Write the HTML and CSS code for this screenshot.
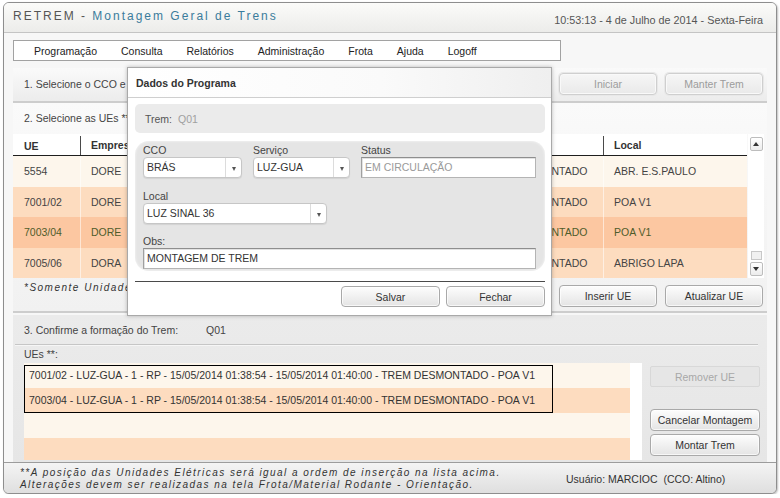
FILE: index.html
```html
<!DOCTYPE html>
<html lang="pt-BR">
<head>
<meta charset="utf-8">
<title>RETREM - Montagem Geral de Trens</title>
<link rel="stylesheet" href="styles.css">
</head>
<body>
<div class="window">
  <header class="titlebar">
    <h1 class="apptitle"><span class="app">RETREM - </span><span class="screen">Montagem Geral de Trens</span></h1>
    <div class="clock">10:53:13 - 4 de Julho de 2014 - Sexta-Feira</div>
  </header>

  <main class="content">
    <nav class="menu">
      <a>Programação</a><a>Consulta</a><a>Relatórios</a><a>Administração</a><a>Frota</a><a>Ajuda</a><a>Logoff</a>
    </nav>

    <section class="step1">
      <div class="step-text">1. Selecione o CCO e</div>
      <div class="btn-pair">
        <button class="btn btn-off">Iniciar</button>
        <button class="btn btn-off">Manter Trem</button>
      </div>
    </section>

    <section class="step2">
      <div class="step-title">2. Selecione as UEs **:</div>
      <div class="grid-wrap">
        <div class="grid">
          <div class="grow ghead"><span>UE</span><span>Empresa</span><span></span><span></span><span></span><span>Local</span></div>
          <div class="grow r-light"><span>5554</span><span>DORE</span><span></span><span></span><span>DESMONTADO</span><span>ABR. E.S.PAULO</span></div>
          <div class="grow r-peach"><span>7001/02</span><span>DORE</span><span></span><span></span><span>DESMONTADO</span><span>POA V1</span></div>
          <div class="grow r-sel"><span>7003/04</span><span>DORE</span><span></span><span></span><span>DESMONTADO</span><span>POA V1</span></div>
          <div class="grow r-peach"><span>7005/06</span><span>DORA</span><span></span><span></span><span>DESMONTADO</span><span>ABRIGO LAPA</span></div>
        </div>
        <div class="vscroll">
          <span class="sb-btn"><i class="tri-up"></i></span>
          <span class="sb-space"></span>
          <span class="sb-thumb"></span>
          <span class="sb-btn"><i class="tri-down"></i></span>
        </div>
      </div>
      <div class="step2-foot">
        <p class="note">*Somente Unidades</p>
        <div class="btn-pair">
          <button class="btn">Inserir UE</button>
          <button class="btn">Atualizar UE</button>
        </div>
      </div>
    </section>

    <section class="step3">
      <div class="s3-head"><span>3. Confirme a formação do Trem:</span><span class="s3-train">Q01</span></div>
      <div class="s3-label">UEs **:</div>
      <div class="s3-body">
        <div class="uelist">
          <div class="ue-rows">
            <div class="ue-row r-light">7001/02 - LUZ-GUA - 1 - RP - 15/05/2014 01:38:54 - 15/05/2014 01:40:00 - TREM DESMONTADO - POA V1</div>
            <div class="ue-row r-peach">7003/04 - LUZ-GUA - 1 - RP - 15/05/2014 01:38:54 - 15/05/2014 01:40:00 - TREM DESMONTADO - POA V1</div>
            <div class="ue-row r-light"></div>
            <div class="ue-row r-peach"></div>
            <div class="ue-sel"></div>
          </div>
        </div>
        <div class="s3-actions">
          <button class="btn btn-dis">Remover UE</button>
          <div class="s3-main">
            <button class="btn">Cancelar Montagem</button>
            <button class="btn">Montar Trem</button>
          </div>
        </div>
      </div>
    </section>
  </main>

  <footer class="statusbar">
    <div class="foot-notes">
      <p>**A posição das Unidades Elétricas será igual a ordem de inserção na lista acima.</p>
      <p>Alterações devem ser realizadas na tela Frota/Material Rodante - Orientação.</p>
    </div>
    <div class="user">Usuário: MARCIOC&nbsp; (CCO: Altino)</div>
  </footer>

  <div class="modal">
    <div class="modal-title">Dados do Programa</div>
    <div class="modal-body">
      <div class="train-box"><span class="tlbl">Trem:</span><span class="tval">Q01</span></div>
      <div class="fields">
        <div class="frow">
          <div class="field f-cco">
            <span class="flabel">CCO</span>
            <span class="select"><span class="sel-val">BRÁS</span><span class="sel-btn"><i class="tri-down"></i></span></span>
          </div>
          <div class="field f-serv">
            <span class="flabel">Serviço</span>
            <span class="select"><span class="sel-val">LUZ-GUA</span><span class="sel-btn"><i class="tri-down"></i></span></span>
          </div>
          <div class="field f-status">
            <span class="flabel">Status</span>
            <span class="input input-off">EM CIRCULAÇÃO</span>
          </div>
        </div>
        <div class="frow frow-gap">
          <div class="field f-local">
            <span class="flabel">Local</span>
            <span class="select"><span class="sel-val">LUZ SINAL 36</span><span class="sel-btn"><i class="tri-down"></i></span></span>
          </div>
        </div>
        <div class="frow frow-gap2">
          <div class="field f-obs">
            <span class="flabel">Obs:</span>
            <span class="input">MONTAGEM DE TREM</span>
          </div>
        </div>
      </div>
      <div class="modal-foot">
        <button class="btn mbtn">Salvar</button>
        <button class="btn mbtn">Fechar</button>
      </div>
    </div>
  </div>
</div>
</body>
</html>
```

FILE: styles.css
```css
* { box-sizing: border-box; }
html, body { margin: 0; background: #ffffff; }
body {
  font-family: "Liberation Sans", Arial, sans-serif;
  font-size: 10.5px;
  color: #333;
}
p { margin: 0; }

.window {
  position: relative;
  margin: 2px 0 0 3px;
  width: 774px;
  height: 492px;
  border: 1px solid #8e8e8e;
  border-radius: 6px;
  background: #f7f7f7;
  display: flex;
  flex-direction: column;
  overflow: hidden;
  box-shadow: 1px 1px 2px rgba(0,0,0,.25);
}

/* title bar */
.titlebar {
  height: 30px;
  flex: none;
  display: flex;
  align-items: center;
  justify-content: space-between;
  padding: 0 13px 0 9px;
  background: linear-gradient(#fbfbf9, #ececea);
  border-bottom: 1px solid #c4c4c4;
}
.apptitle {
  margin: 0;
  font-size: 12px;
  font-weight: normal;
  letter-spacing: 2px;
  line-height: 14px;
  margin-top: -3px;
}
.apptitle .app { color: #555; }
.apptitle .screen { color: #3b7c9c; }
.clock { font-size: 10.8px; color: #555; padding-top: 4px; }

/* content */
.content {
  flex: none;
  padding: 7px 9px 0 9px;
  display: flex;
  flex-direction: column;
}
.menu {
  width: 548px;
  height: 21px;
  border: 1px solid #a2a2a2;
  background: #fff;
  display: flex;
  align-items: center;
  gap: 24px;
  padding-left: 20px;
  color: #222;
}

.step1 {
  margin-top: 7px;
  height: 35px;
  display: flex;
  align-items: center;
  justify-content: space-between;
  padding: 0 4px 2px 11px;
  background: linear-gradient(#fafafa, #ececec);
  border-bottom: 2px solid #cdcdcd;
}
.step-text { color: #444; }

.btn-pair { display: flex; gap: 8px; }

.btn {
  font-family: "Liberation Sans", Arial, sans-serif;
  font-size: 10.5px;
  color: #333;
  height: 22px;
  width: 98px;
  padding: 0;
  border: 1px solid #a9a9a9;
  border-radius: 4px;
  background: linear-gradient(#fdfdfd, #e4e4e4);
  box-shadow: inset 0 0 0 1px rgba(255,255,255,.7);
}
.btn-off {
  color: #9c9c9c;
  border-color: #cfcfcf;
  background: linear-gradient(#f6f6f6, #e9e9e9);
  box-shadow: inset 0 0 0 1px #f9f9f9, 0 0 0 1px #e8e8e8;
}
.btn-dis {
  color: #a8a8a8;
  border-color: #d8d8d8;
  background: #e6e6e6;
  box-shadow: none;
  border-radius: 2px;
}

/* step 2 */
.step2 {
  background: linear-gradient(#fafafa, #f1f1f1);
  border-bottom: 2px solid #cdcdcd;
}
.step-title {
  height: 31px;
  line-height: 31px;
  padding-left: 11px;
  color: #444;
}
.grid-wrap {
  display: flex;
  padding-right: 3px;
}
.grid { width: 734px; }
.grow {
  display: grid;
  grid-template-columns: 68px 80px 155px 155px 133px 143px;
  height: 30.5px;
  align-items: center;
  color: #444;
}
.grow > span {
  padding-left: 10px;
  height: 100%;
  display: flex;
  align-items: center;
  white-space: nowrap;
  overflow: hidden;
  border-right: 1px solid rgba(255,255,255,.55);
}
.grow > span:nth-child(5) { padding-left: 42px; }
.grow > span:first-child { padding-left: 11px; }
.grow > span:last-child { border-right: none; }
.ghead {
  height: 22px;
  background: #fff;
  font-weight: bold;
  color: #333;
  border-bottom: 1.5px solid #1e1e1e;
}
.ghead > span { border-right: 1px solid transparent; }
.ghead > span:first-child,
.ghead > span:nth-child(5) {
  border-right-color: #4a4a4a;
  height: 19px;
  align-self: end;
}
.r-light { background: #fdf6ec; }
.r-peach { background: #fddcbf; }
.r-sel { background: #fcc7a1; color: #4f5c2b; }

.vscroll {
  width: 16px;
  margin-left: 1px;
  background: #fff;
  display: flex;
  flex-direction: column;
  align-items: center;
  padding: 3px 0 2px;
}
.sb-btn {
  width: 13px;
  height: 14px;
  border: 1px solid #bdbdbd;
  border-radius: 2px;
  background: linear-gradient(#ffffff, #ececec);
  display: flex;
  align-items: center;
  justify-content: center;
}
.sb-space { flex: 1; }
.sb-thumb {
  width: 11px;
  height: 9px;
  border: 1px solid #c8c8c8;
  background: #f1f1f1;
  margin-bottom: 2px;
}
.tri-up, .tri-down { display: block; width: 0; height: 0; border-left: 3px solid transparent; border-right: 3px solid transparent; }
.tri-up { border-bottom: 4px solid #333; }
.tri-down { border-top: 4px solid #333; }

.step2-foot {
  height: 33px;
  display: flex;
  justify-content: space-between;
  align-items: flex-start;
  padding: 0 4px 0 11px;
}
.note {
  margin-top: 4px;
  font-style: italic;
  font-size: 10px;
  letter-spacing: 1.5px;
  color: #333;
  line-height: 12px;
}
.step2-foot .btn-pair { margin-top: 7px; }
.step2-foot .btn { height: 22px; }

/* step 3 */
.step3 {
  margin-top: 2px;
  height: 147px;
  background: linear-gradient(#ebebeb, #e6e6e6);
  padding: 0 0 2px 0;
  display: flex;
  flex-direction: column;
}
.s3-head {
  height: 30px;
  margin: 0 9px 0 2px;
  padding-left: 9px;
  display: flex;
  align-items: center;
  border-bottom: 1px solid #c6c6c6;
  box-shadow: 0 1px 0 #f6f6f6;
  color: #444;
}
.s3-train { margin-left: 28px; }
.s3-label {
  height: 18px;
  line-height: 18px;
  padding-left: 11px;
  color: #444;
}
.s3-body {
  flex: 1;
  display: flex;
  padding-left: 11px;
}
.uelist {
  width: 618px;
  height: 97px;
  background: #fff;
  overflow: hidden;
}
.ue-rows {
  position: relative;
  width: 606px;
}
.ue-row {
  height: 25px;
  line-height: 25px;
  padding-left: 5px;
  color: #333;
  white-space: nowrap;
}
.ue-sel {
  position: absolute;
  left: 0;
  top: 2px;
  width: 529px;
  height: 48px;
  border: 1px solid #000;
}
.s3-actions {
  width: 110px;
  margin-left: 8px;
  padding: 3px 0 4px;
  display: flex;
  flex-direction: column;
  justify-content: space-between;
}
.s3-actions .btn { width: 110px; }
.s3-actions .btn-dis { height: 21px; }
.s3-main { display: flex; flex-direction: column; gap: 3px; }

/* footer */
.statusbar {
  flex: none;
  height: 31px;
  border-top: 1px solid #9c9c9c;
  background: linear-gradient(#f4f4f4, #dfdfdf);
  display: flex;
  align-items: center;
  padding-left: 16px;
}
.foot-notes {
  width: 546px;
  font-style: italic;
  font-size: 10px;
  letter-spacing: 1.45px;
  line-height: 12px;
  color: #333;
  padding-top: 1px;
}
.user { color: #333; padding-top: 2px; }

/* modal */
.modal {
  position: absolute;
  left: 123px;
  top: 64px;
  width: 425px;
  height: 249px;
  background: #fff;
  border: 1px solid #a9a9a9;
  box-shadow: 0 0 4px rgba(0,0,0,.25);
  display: flex;
  flex-direction: column;
}
.modal-title {
  height: 30px;
  line-height: 30px;
  padding-left: 8px;
  font-weight: bold;
  color: #333;
  border-bottom: 1px solid #cfcfcf;
  background: linear-gradient(90deg, #ffffff 0%, #fafafa 60%, #efefef 100%);
}
.modal-body { padding: 0 6px 0 7px; }
.train-box {
  margin-top: 6px;
  height: 29px;
  border-radius: 5px;
  background: #ebebeb;
  display: flex;
  align-items: center;
  padding-left: 10px;
  gap: 6px;
}
.tlbl { color: #555; }
.tval { color: #a0a0a0; }

.fields {
  margin-top: 8px;
  height: 130px;
  border-radius: 14px;
  background: #e5e5e5;
  box-shadow: inset 0 0 3px rgba(255,255,255,.8);
  padding: 2px 9px 2px 8px;
}
.frow { display: flex; gap: 11px; }
.frow-gap { margin-top: 11px; }
.frow-gap2 { margin-top: 10px; }
.field { display: flex; flex-direction: column; }
.flabel { height: 14px; line-height: 14px; color: #444; }
.f-cco { width: 99px; }
.f-serv { width: 97px; }
.f-status { flex: 1; }
.f-local { width: 184px; }
.f-obs { flex: 1; }

.select {
  height: 21px;
  display: flex;
  background: #fff;
  border: 1px solid #c6c6c6;
  border-radius: 4px;
  box-shadow: 0 1px 1px rgba(0,0,0,.08);
}
.sel-val { flex: 1; padding-left: 3px; line-height: 19px; color: #333; }
.sel-btn {
  width: 16px;
  border-left: 1px solid #dcdcdc;
  display: flex;
  align-items: center;
  justify-content: center;
  padding-top: 2px;
}
.sel-btn .tri-down { border-top-color: #555; border-left-width: 2.5px; border-right-width: 2.5px; border-top-width: 4px; }
.input {
  height: 21px;
  line-height: 19px;
  padding-left: 3px;
  background: #fff;
  border: 1px solid #b4b4b4;
  border-top-color: #8e8e8e;
  border-left-color: #a0a0a0;
  box-shadow: inset 1px 1px 0 #e2e2e2;
  color: #333;
}
.input-off { color: #9a9a9a; }

.modal-foot {
  margin-top: 10px;
  border-top: 1px solid #4a4a4a;
  display: flex;
  justify-content: flex-end;
  gap: 6px;
  padding-top: 4px;
}
.mbtn { width: 99px; height: 21px; }
```
